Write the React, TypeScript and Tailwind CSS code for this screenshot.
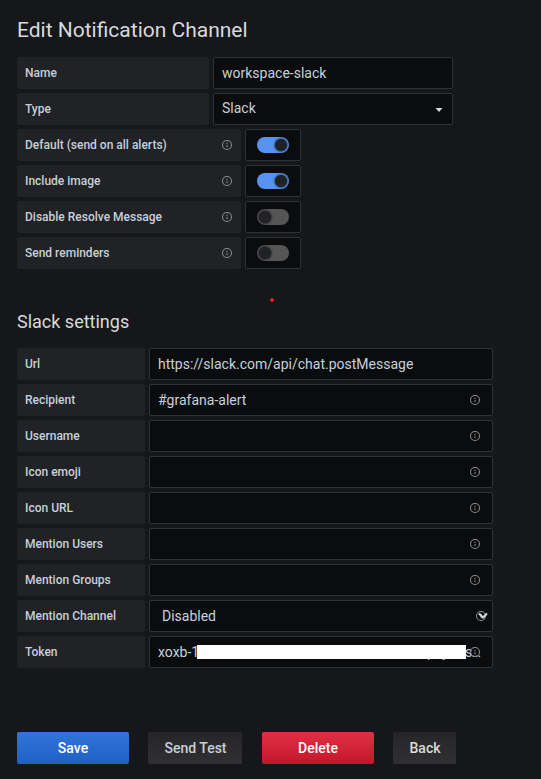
import React from 'react';

function Info({ className = '' }: { className?: string }) {
  return (
    <svg viewBox="0 0 24 24" className={`h-3 w-3 shrink-0 fill-[#8e8e8e] ${className}`}>
      <path d="M12,2A10,10,0,1,0,22,12,10.01114,10.01114,0,0,0,12,2Zm0,18a8,8,0,1,1,8-8A8.00917,8.00917,0,0,1,12,20Zm0-8.5a1,1,0,0,0-1,1v3a1,1,0,0,0,2,0v-3A1,1,0,0,0,12,11.5Zm0-4a1.25,1.25,0,1,0,1.25,1.25A1.25,1.25,0,0,0,12,7.5Z" />
    </svg>
  );
}

function Label({ text, width, info }: { text: string; width: string; info?: boolean }) {
  return (
    <div className={`flex h-8 shrink-0 items-center justify-between rounded-[2px] bg-[#202226] px-2 text-[12px] font-medium text-[#c7d0d9] ${width}`}>
      <span>{text}</span>
      {info && <Info />}
    </div>
  );
}

const field =
  'relative flex h-8 items-center rounded-[2px] border border-[#2c3235] bg-[#0b0c0e] px-2 text-[14px] text-[#c7d0d9]';

function Toggle({ on }: { on: boolean }) {
  return (
    <div className="flex h-8 w-14 items-center justify-center rounded-[2px] border border-[#2c3235] bg-[#0b0c0e]">
      <div className={`flex h-4 w-8 items-center rounded-full px-[2px] ${on ? 'justify-end bg-[#5794f2]' : 'justify-start bg-[#555555]'}`}>
        <div className="h-3 w-3 rounded-full bg-[#202226] shadow-[0_0_3px_black]" />
      </div>
    </div>
  );
}

const toggles = [
  { label: 'Default (send on all alerts)', on: true },
  { label: 'Include image', on: true },
  { label: 'Disable Resolve Message', on: false },
  { label: 'Send reminders', on: false },
];

const settings = [
  { label: 'Url', value: 'https://slack.com/api/chat.postMessage', info: false },
  { label: 'Recipient', value: '#grafana-alert', info: true },
  { label: 'Username', value: '', info: true },
  { label: 'Icon emoji', value: '', info: true },
  { label: 'Icon URL', value: '', info: true },
  { label: 'Mention Users', value: '', info: true },
  { label: 'Mention Groups', value: '', info: true },
];

const button = 'flex h-8 items-center justify-center rounded-[2px] text-[14px] font-medium';

export default function App() {
  return (
    <div className="h-[779px] w-[541px] overflow-hidden bg-[#16171a] pl-[17px] font-['Roboto',sans-serif] text-[#d8d9da]">
      <h1 className="pt-[15px] text-[21px] leading-[30px]">Edit Notification Channel</h1>

      <div className="mt-3 flex flex-col gap-1">
        <div className="flex gap-1">
          <Label text="Name" width="w-48" />
          <div className={`${field} w-60`}>workspace-slack</div>
        </div>
        <div className="flex gap-1">
          <Label text="Type" width="w-48" />
          <div className={`${field} w-60 justify-between pb-[2px]`}>
            <span>Slack</span>
            <svg viewBox="0 0 8 4" className="mt-[4px] mr-[1px] h-1 w-2 fill-[#d8d9da]">
              <path d="M0.5 0h7L4 4z" />
            </svg>
          </div>
        </div>
        {toggles.map((t) => (
          <div key={t.label} className="flex gap-1">
            <Label text={t.label} width="w-56" info />
            <Toggle on={t.on} />
          </div>
        ))}
      </div>

      <div className="mt-[29px] ml-[253px] h-1 w-1 rounded-full bg-[#e61d23]" />

      <h2 className="mt-[8px] text-[18px] leading-6">Slack settings</h2>

      <div className="mt-[14px] flex flex-col gap-1">
        {settings.map((s) => (
          <div key={s.label} className="flex gap-1">
            <Label text={s.label} width="w-32" />
            <div className={`${field} w-[344px] justify-between`}>
              <span>{s.value}</span>
              {s.info && <Info className="mr-[3px]" />}
            </div>
          </div>
        ))}
        <div className="flex gap-1">
          <Label text="Mention Channel" width="w-32" />
          <div className={`${field} w-[344px] justify-between pl-3`}>
            <span>Disabled</span>
            <Info className="mr-[-3px]" />
            <svg viewBox="0 0 10 8" className="absolute top-[11px] right-[4px] h-2 w-[10px] fill-none stroke-[#d8d9da] stroke-2">
              <path d="M1 1.5l4 4 4-4" />
            </svg>
          </div>
        </div>
        <div className="flex gap-1">
          <Label text="Token" width="w-32" />
          <div className={`${field} w-[344px] justify-between`}>
            <span>xoxb-1</span>
            <span className="absolute top-[6px] left-[277px] leading-[18px]">p</span>
            <span className="absolute top-[6px] left-[292px] leading-[18px]">y</span>
            <span className="absolute top-[6px] left-[315px] leading-[18px] tracking-[-0.7px]">s...</span>
            <span className="absolute top-[8px] left-[47px] h-[14px] w-[269px] bg-white" />
            <Info className="relative mr-[3px]" />
          </div>
        </div>
      </div>

      <div className="mt-16 flex">
        <div className={`${button} w-28 bg-linear-to-b from-[#3274d9] to-[#1f60c4] text-white`}>Save</div>
        <div className={`${button} ml-[19px] w-[94px] bg-linear-to-b from-[#262628] to-[#303032] pl-px text-[#c7d0d9]`}>Send Test</div>
        <div className={`${button} ml-5 w-28 bg-linear-to-b from-[#e02f44] to-[#c4162a] text-white`}>Delete</div>
        <div className={`${button} ml-[19px] w-[63px] bg-linear-to-b from-[#262628] to-[#303032] pl-px text-[#d8d9da]`}>Back</div>
      </div>
    </div>
  );
}
